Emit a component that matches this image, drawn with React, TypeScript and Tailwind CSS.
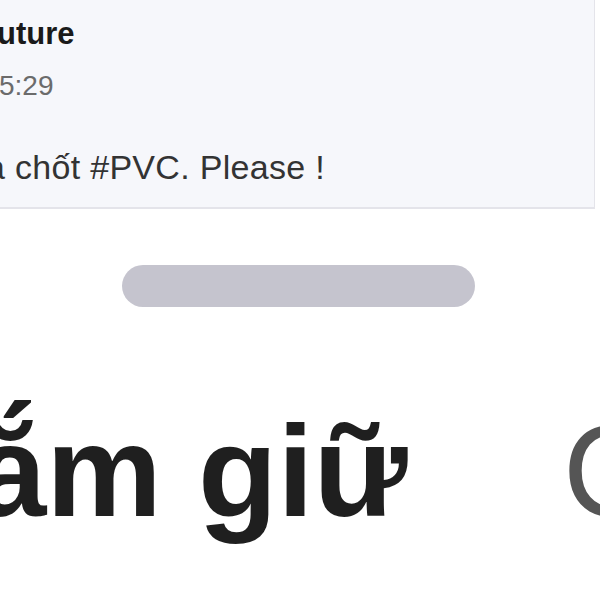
import React from "react";

export default function App() {
  return (
    <div className="w-[600px] h-[600px] bg-white overflow-hidden font-['Liberation_Sans',Arial,sans-serif]">
      <div className="w-[595px] h-[209px] bg-[#f6f7fb] border-b-2 border-r border-[#e4e4ea] flex flex-col overflow-hidden">
        <div className="pt-[16px] text-[31px] leading-[36px] font-bold text-[#1a1a1a] whitespace-nowrap -ml-[3px]">
          uture
        </div>
        <div className="mt-[18px] text-[28px] leading-[32px] text-[#6b6b6b] whitespace-nowrap -ml-[1px]">
          5:29
        </div>
        <div className="mt-[45px] text-[34px] leading-[40px] tracking-[0.3px] text-[#333333] whitespace-nowrap -ml-[14px]">
          à chốt #PVC. Please !
        </div>
      </div>
      <div className="mt-[56px] ml-[122px] w-[353px] h-[42px] rounded-full bg-[#c5c4ce]" />
      <div className="mt-[89px] flex items-baseline whitespace-nowrap text-[130px] leading-[150px]">
        <span className="font-bold text-[#1f1f1f] -ml-[26px]">ắm giữ</span>
        <span className="ml-[155px] text-[#555555]">C</span>
      </div>
    </div>
  );
}
